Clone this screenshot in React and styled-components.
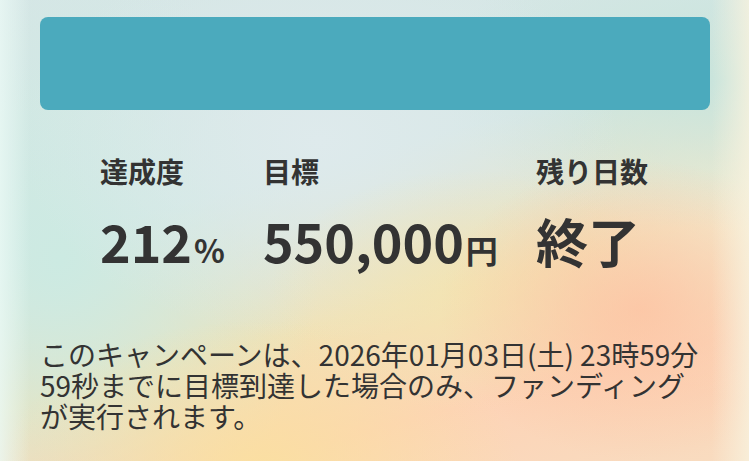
import React from "react";
import styled, { createGlobalStyle } from "styled-components";

const GlobalStyle = createGlobalStyle`
  html, body {
    margin: 0;
    padding: 0;
  }
  body {
    font-family: "Noto Sans CJK JP", "Noto Sans", sans-serif;
    color: #333;
  }
`;

const Page = styled.main`
  box-sizing: border-box;
  width: 100vw;
  height: 100vh;
  padding: 17px 39px 0 40px;
  overflow: hidden;
  background-color: #f6dcc0;
  background-image:
    linear-gradient(to right, rgba(236, 250, 246, 0.75) 0%, rgba(236, 250, 246, 0) 4%, rgba(250, 246, 232, 0) 95%, rgba(248, 242, 222, 0.8) 100%),
    radial-gradient(ellipse 200px 150px at 640px 310px, rgba(253, 196, 164, 0.85), rgba(253, 196, 164, 0)),
    radial-gradient(ellipse 200px 120px at 470px 290px, rgba(244, 228, 176, 0.8), rgba(244, 228, 176, 0)),
    radial-gradient(ellipse 260px 150px at 260px 470px, rgba(250, 224, 160, 0.95), rgba(250, 224, 160, 0)),
    radial-gradient(ellipse 300px 200px at 320px 140px, rgba(222, 234, 236, 1), rgba(222, 234, 236, 0)),
    radial-gradient(ellipse 260px 300px at 60px 260px, rgba(204, 234, 226, 1), rgba(204, 234, 226, 0)),
    radial-gradient(ellipse 280px 150px at 720px 80px, rgba(200, 228, 220, 1), rgba(200, 228, 220, 0)),
    radial-gradient(ellipse 200px 200px at 760px 200px, rgba(244, 236, 210, 1), rgba(244, 236, 210, 0)),
    linear-gradient(165deg, #d6e6e6 0%, #d6e7e5 38%, #f1e2b6 62%, #fdd3b6 80%, #f8dcc0 100%);
`;

const Banner = styled.div`
  height: 93px;
  border-radius: 8px;
  background: #4baabd;
`;

const Stats = styled.section`
  display: flex;
  gap: 38px;
  padding-left: 60px;
  margin-top: 47px;
`;

const Stat = styled.div`
  display: flex;
  flex-direction: column;
  gap: 30px;
`;

const Label = styled.span`
  font-size: 28px;
  font-weight: 700;
  line-height: 1;
  color: #333;
`;

const Value = styled.span`
  font-size: 52px;
  font-weight: 700;
  line-height: 1;
  color: #333;
  white-space: nowrap;
`;

const Unit = styled.span`
  font-size: 32px;
  margin-left: 2px;
`;

const Note = styled.p`
  margin: 72px 0 0;
  font-size: 28px;
  line-height: 31px;
  color: #333;
`;

const stats = [
  { label: "達成度", value: "212", unit: "%" },
  { label: "目標", value: "550,000", unit: "円" },
  { label: "残り日数", value: "終了" },
];

export default function App() {
  return (
    <>
      <GlobalStyle />
      <Page>
        <Banner />
        <Stats>
          {stats.map((s) => (
            <Stat key={s.label}>
              <Label>{s.label}</Label>
              <Value>
                {s.value}
                {s.unit && <Unit>{s.unit}</Unit>}
              </Value>
            </Stat>
          ))}
        </Stats>
        <Note>
          このキャンペーンは、2026年01月03日(土) 23時59分59秒までに目標到達した場合のみ、ファンディングが実行されます。
        </Note>
      </Page>
    </>
  );
}
